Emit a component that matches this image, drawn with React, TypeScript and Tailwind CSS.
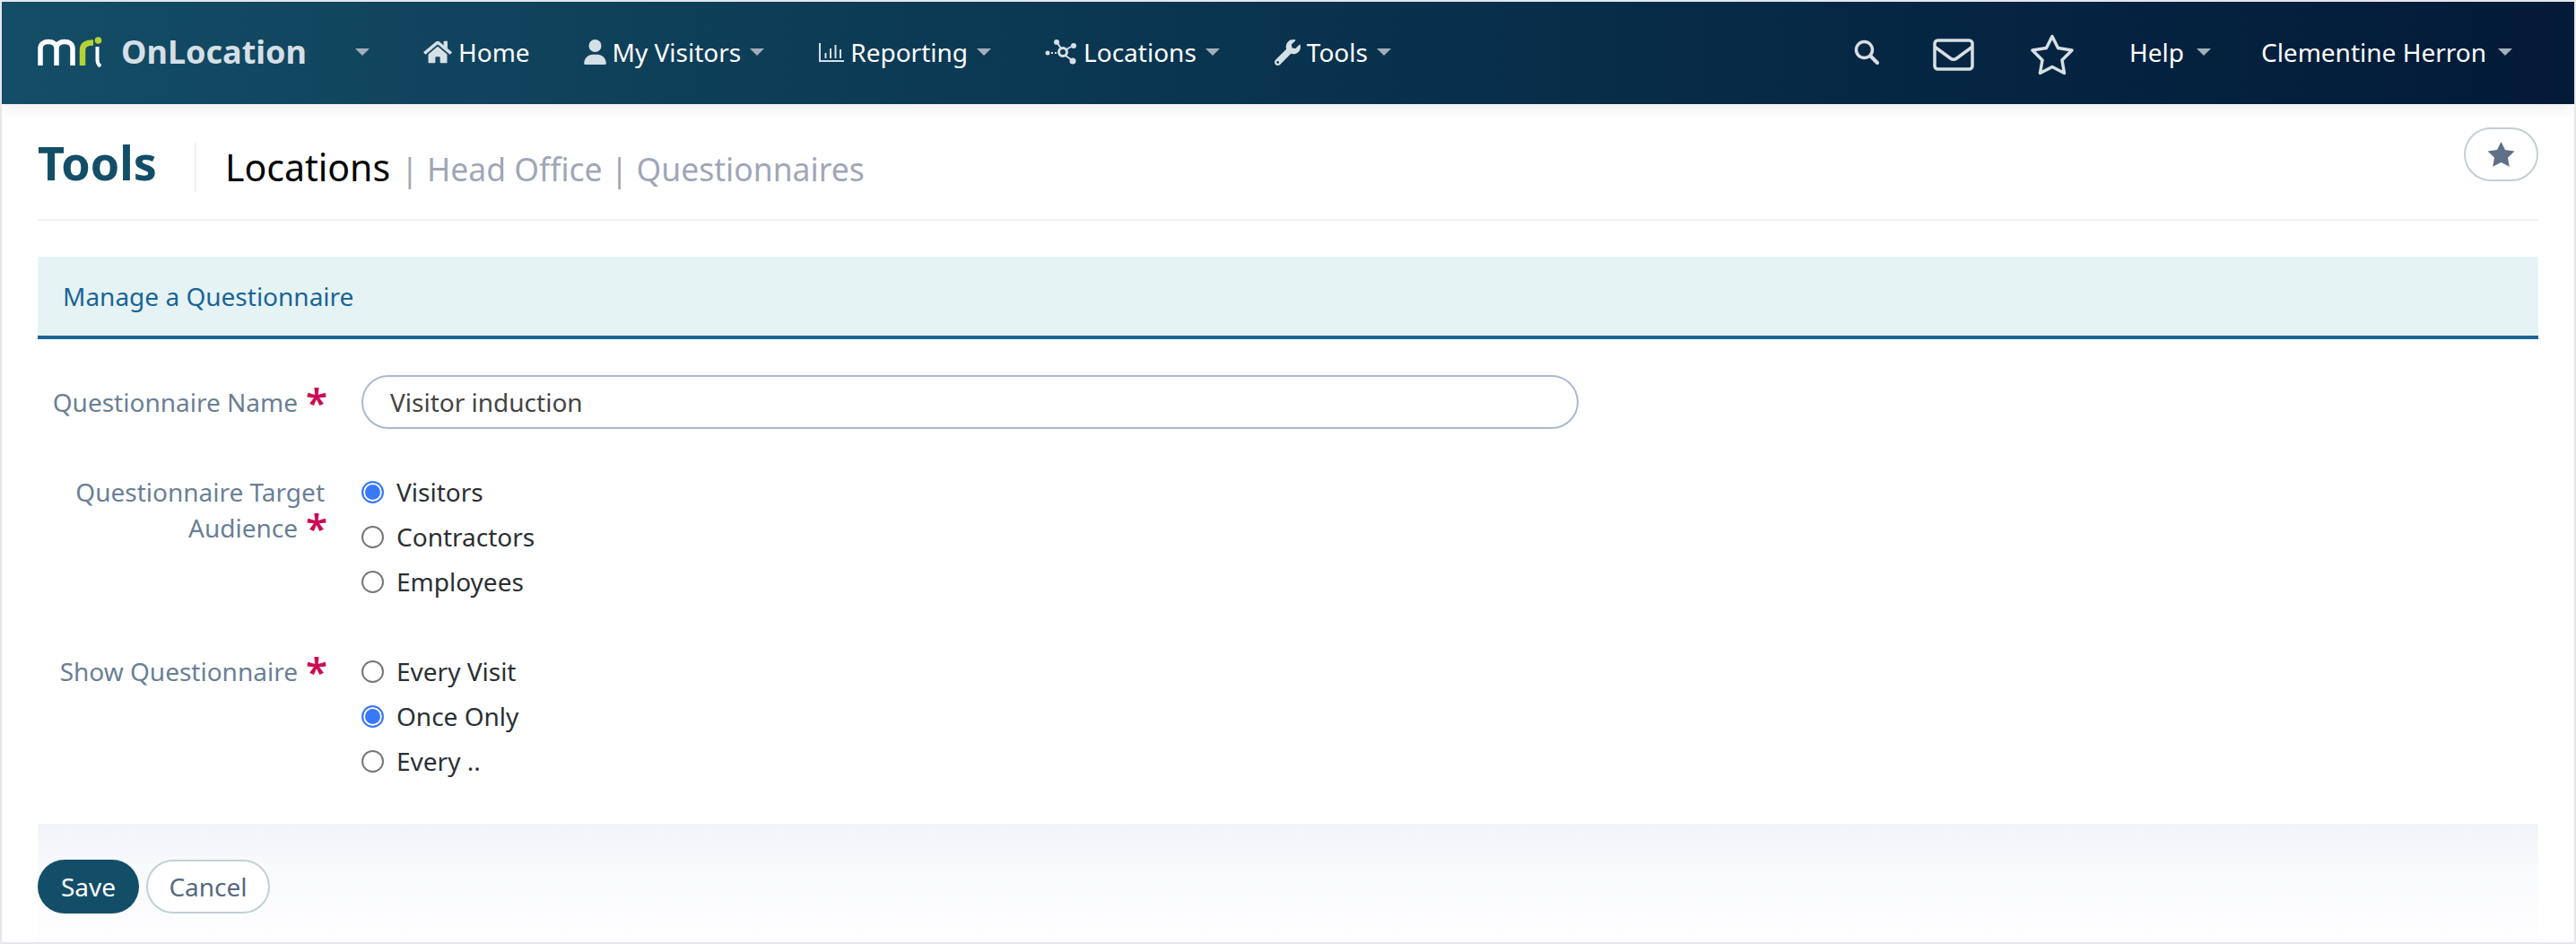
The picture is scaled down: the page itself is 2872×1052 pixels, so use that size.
import React from "react";

const Caret = ({ cls = "" }: { cls?: string }) => (
  <span className={"inline-block w-0 h-0 border-l-[8px] border-r-[8px] border-t-[8px] border-l-transparent border-r-transparent border-t-[#a3afb8] " + cls} />
);

const Logo = () => (
  <svg width="72" height="34" viewBox="0 0 72 34" fill="none" className="block">
    <path d="M3 32V13C3 8 7 5.500 12 5.500C17 5.500 21 8 21 13V32M21 13C21 8 25 5.500 30 5.500C35 5.500 39 8 39 13V32" stroke="#fff" strokeWidth="5.500" />
    <path d="M50 32V15C50 9 54 6.500 62 6.500" stroke="#b5d334" strokeWidth="6.500" />
    <circle cx="67.500" cy="4" r="3.800" fill="#b5d334" />
    <path d="M66.500 11V26C66.500 29 67.500 31 70 33" stroke="#fff" strokeWidth="4" />
  </svg>
);

const HomeIcon = () => (
  <svg width="32" height="28" viewBox="0 0 576 512" fill="#d5dfe6" className="block"><path d="M280.370 148.260L96 300.110V464a16 16 0 0 0 16 16l112.060-.29a16 16 0 0 0 15.920-16V368a16 16 0 0 1 16-16h64a16 16 0 0 1 16 16v95.640a16 16 0 0 0 16 16.050L464 480a16 16 0 0 0 16-16V300L295.670 148.260a12.190 12.190 0 0 0-15.300 0zM571.600 251.470L488 182.560V44.050a12 12 0 0 0-12-12h-56a12 12 0 0 0-12 12v72.610L318.470 43a48 48 0 0 0-61 0L4.340 251.470a12 12 0 0 0-1.600 16.900l25.500 31A12 12 0 0 0 45.150 301l235.220-193.740a12.190 12.190 0 0 1 15.300 0L530.900 301a12 12 0 0 0 16.900-1.600l25.500-31a12 12 0 0 0-1.700-16.930z" /></svg>
);
const UserIcon = () => (
  <svg width="25" height="28" viewBox="0 0 448 512" fill="#d5dfe6" className="block"><path d="M224 256A128 128 0 1 0 224 0a128 128 0 1 0 0 256zm-45.700 48C79.800 304 0 383.800 0 482.300 0 498.700 13.300 512 29.700 512h388.600c16.400 0 29.700-13.300 29.700-29.700C448 383.800 368.200 304 269.700 304h-91.400z" /></svg>
);
const ChartIcon = () => (
  <svg width="28" height="21" viewBox="0 0 28 21" fill="none" stroke="#d5dfe6" className="block">
    <path d="M1 0V20H28" strokeWidth="2" />
    <path d="M7.500 11V17M13 6V17M18.500 2V17M24 7V17" strokeWidth="2" />
  </svg>
);
const NetIcon = () => (
  <svg width="36" height="28" viewBox="0 0 36 28" fill="none" className="block">
    <g stroke="#d5dfe6" strokeWidth="2">
      <path d="M14 4L18 10M23 18L30 23M24 11L31 7" />
      <circle cx="20" cy="14" r="4.500" strokeWidth="3" />
      <path d="M7 15H13" strokeDasharray="2 2" />
    </g>
    <g fill="#d5dfe6">
      <circle cx="13" cy="3" r="3" />
      <circle cx="31" cy="24" r="3.500" />
      <circle cx="32" cy="7" r="3" />
      <circle cx="3" cy="15" r="2.500" />
    </g>
  </svg>
);
const WrenchIcon = () => (
  <svg width="29" height="29" viewBox="0 0 512 512" fill="#d5dfe6" className="block"><path d="M507.730 109.100c-2.240-9.030-13.540-12.090-20.120-5.510l-74.360 74.360-67.880-11.310-11.310-67.880 74.360-74.360c6.620-6.620 3.430-17.900-5.660-20.160-47.380-11.740-99.550.91-136.580 37.930-39.640 39.640-50.550 97.100-34.050 147.200L18.740 402.760c-24.990 24.990-24.990 65.510 0 90.500 24.990 24.990 65.510 24.990 90.500 0l213.210-213.210c50.120 16.710 107.470 5.680 147.370-34.220 37.070-37.070 49.700-89.320 37.910-136.730zM64 472c-13.250 0-24-10.750-24-24 0-13.260 10.750-24 24-24s24 10.740 24 24c0 13.250-10.750 24-24 24z" /></svg>
);
const SearchIcon = () => (
  <svg width="28" height="28" viewBox="0 0 28 28" fill="none" stroke="#d8dfe3" strokeWidth="3.500" className="block">
    <circle cx="11.500" cy="11.500" r="9" />
    <path d="M18.500 18.500L26 26" strokeLinecap="round" strokeWidth="4" />
  </svg>
);
const MailIcon = () => (
  <svg width="46" height="36" viewBox="0 0 46 36" fill="none" stroke="#d8dfe3" strokeWidth="3.500" className="block">
    <rect x="2" y="2" width="42" height="32" rx="3.500" />
    <path d="M2.500 9.500L19.500 22Q23 24.500 26.500 22L43.500 9.500" />
  </svg>
);
const StarOutline = () => (
  <svg width="50" height="46" viewBox="0 0 50 46" fill="none" stroke="#d8dfe3" strokeWidth="3.500" strokeLinejoin="round" className="block">
    <path d="M25 2.500L31.500 15.500L47 18L36 29L38.500 43.500L25 36.500L11.500 43.500L14 29L3 18L18.500 15.500Z" />
  </svg>
);
const StarFilled = () => (
  <svg width="31" height="28" viewBox="0 0 31 28" fill="#5f7186" className="block">
    <path d="M15.500 0L20 9L30.500 10.500L23 17.700L24.800 27.800L15.500 23L6.200 27.800L8 17.700L0.500 10.500L11 9Z" />
  </svg>
);

const NavItem = ({ icon, label, className = "", caret = true }: { icon: React.ReactNode; label: string; className?: string; caret?: boolean }) => (
  <div className={"flex items-center " + className}>
    <span className="flex items-center">{icon}</span>
    <span className="ml-[7px] text-white">{label}</span>
    {caret && <Caret cls="ml-[10px]" />}
  </div>
);

const Star = () => (
  <span className="text-[#cc0a54] text-[44px] leading-[0] font-semibold inline-block ml-[9px] mr-[-3px] align-[-6px]">*</span>
);

const Radio = ({ label, name, checked }: { label: string; name: string; checked?: boolean }) => (
  <label className="flex items-center h-[50px]">
    <input
      type="radio"
      name={name}
      defaultChecked={checked}
      className="m-0 w-[25px] h-[25px] appearance-none rounded-full border-[2px] border-[#767676] bg-white checked:border-[#3b78f7] checked:bg-[#3b78f7] checked:shadow-[inset_0_0_0_2px_#fff]"
    />
    <span className="ml-[14px] text-[#2b2f33]">{label}</span>
  </label>
);

const FieldLabel = ({ children, className = "" }: { children: React.ReactNode; className?: string }) => (
  <div className={"w-[320px] shrink-0 text-right text-[#6a7f95] leading-[40px] " + className}>
    {children}
    <Star />
  </div>
);

export default function App() {
  return (
    <div className="w-[2872px] h-[1052px] border-[2px] border-[#e5e7eb] bg-white overflow-hidden font-['Noto_Sans',sans-serif] text-[28px] leading-[50px] box-border flex flex-col">
      <header className="h-[114px] shrink-0 flex items-center bg-gradient-to-r from-[#144d66] to-[#031a38] shadow-[0_4px_16px_rgba(0,0,0,0.08)] pl-[40px] pr-[69px] pb-[2px]">
        <Logo />
        <span className="ml-[21px] text-[36px] font-bold text-[#d5dfe6]">OnLocation</span>
        <Caret cls="ml-[54px]" />
        <NavItem className="ml-[60px]" icon={<HomeIcon />} label="Home" caret={false} />
        <NavItem className="ml-[60px]" icon={<UserIcon />} label="My Visitors" />
        <NavItem className="ml-[61px]" icon={<ChartIcon />} label="Reporting" />
        <NavItem className="ml-[60px]" icon={<NetIcon />} label="Locations" />
        <NavItem className="ml-[61px]" icon={<WrenchIcon />} label="Tools" />
        <div className="flex-1" />
        <SearchIcon />
        <span className="ml-[60px] mt-[6px]"><MailIcon /></span>
        <span className="ml-[62px] mt-[6px]"><StarOutline /></span>
        <span className="ml-[61px] text-white">Help</span>
        <Caret cls="ml-[14px]" />
        <span className="ml-[56px] text-white">Clementine Herron</span>
        <Caret cls="ml-[13px]" />
      </header>

      <main className="flex-1 flex flex-col px-[40px]">
        <div className="h-[130px] shrink-0 border-b-[2px] border-[#f0f2f3] flex items-start">
          <h1 className="mt-[29px] text-[52px] leading-[72px] font-bold text-[#134e68]">Tools</h1>
          <div className="mt-[42px] ml-[42px] h-[56px] w-[2px] bg-[#eef0f1]" />
          <div className="mt-[40px] ml-[32px] flex items-baseline leading-[60px]">
            <span className="text-[41px] text-black">Locations</span>
            <span className="ml-[12px] text-[35.5px] text-[#a0a6b8]">| Head Office | Questionnaires</span>
          </div>
          <div className="flex-1" />
          <button className="mt-[26px] w-[83px] h-[60px] rounded-full border-[2px] border-[#c2d0d4] bg-white flex items-center justify-center">
            <StarFilled />
          </button>
        </div>

        <div className="mt-[40px] h-[92px] shrink-0 bg-[#e5f3f4] border-b-[4px] border-[#1d6496] flex items-center pl-[28px] text-[#1a6496]">
          Manage a Questionnaire
        </div>

        <section className="mt-[40px] flex">
          <FieldLabel className="pt-[10px]">Questionnaire Name</FieldLabel>
          <input
            readOnly
            value="Visitor induction"
            className="ml-[41px] w-[1357px] h-[60px] rounded-full border-[2px] border-[#a9b9d0] pl-[30px] pr-[30px] text-[#444] outline-none bg-white"
          />
        </section>

        <section className="mt-[45px] flex">
          <FieldLabel className="pt-[5px]">Questionnaire Target Audience</FieldLabel>
          <div className="ml-[41px] flex flex-col">
            <Radio name="aud" label="Visitors" checked />
            <Radio name="aud" label="Contractors" />
            <Radio name="aud" label="Employees" />
          </div>
        </section>

        <section className="mt-[50px] flex">
          <FieldLabel className="pt-[5px]">Show Questionnaire</FieldLabel>
          <div className="ml-[41px] flex flex-col">
            <Radio name="show" label="Every Visit" />
            <Radio name="show" label="Once Only" checked />
            <Radio name="show" label="Every .." />
          </div>
        </section>

        <footer className="mt-[45px] flex-1 bg-gradient-to-b from-[#f3f4f8] via-[#f9fafc] via-[40%] to-[#fefeff] pt-[40px] flex items-start gap-[8px]">
          <button className="w-[113px] h-[60px] rounded-full bg-[#134e68] text-white">Save</button>
          <button className="w-[138px] h-[60px] rounded-full bg-white border-[2px] border-[#c2d0d4] text-[#56697f]">Cancel</button>
        </footer>
      </main>
    </div>
  );
}
